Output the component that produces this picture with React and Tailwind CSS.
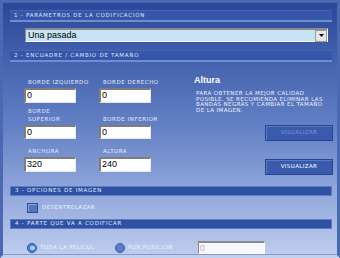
import React from 'react';

const tiny = "font-['DejaVu_Sans',sans-serif] text-[5.5px] uppercase tracking-[0.4px] leading-none whitespace-nowrap";

function Header({ children, dark }) {
  return (
    <div
      className={
        dark
          ? 'h-[10px] w-[322px] flex items-center pl-[4px] bg-[#2f51a3] border border-[#5d7cc4] text-[#e4ebfa]'
          : 'h-[12px] w-[322px] flex items-center pl-[4px] bg-[#3656a9] border-t border-[#4466b4] border-b-2 border-b-[#6f8dd2] text-[#dfe7fa]'
      }
    >
      <span className={`${tiny} tracking-[0.75px]`}>{children}</span>
    </div>
  );
}

function Field({ label, value, h = 'h-[15px]' }) {
  return (
    <div className="flex flex-col justify-end w-[52px]">
      <div className={`${tiny} text-[#e6ecfb] pl-[4px] mb-[3px] tracking-[0.55px]`}>{label}</div>
      <div className={`${h} w-[52px] bg-white border-t-2 border-l-2 border-[#7d7d7d] border-b border-r border-b-[#e8e8e8] border-r-[#e8e8e8] flex items-center pl-[1px] font-['Liberation_Sans',sans-serif] text-[9px] text-black`}>
        {value}
      </div>
    </div>
  );
}

function Btn({ disabled }) {
  return (
    <div
      className={`h-[16px] w-[68px] flex items-center justify-center bg-[#3a5aad] border border-[#26438e] shadow-[inset_1px_1px_0_#5a7ac4] ${tiny} ${
        disabled ? 'text-[#7f97d2]' : 'text-white'
      }`}
    >
      Visualizar
    </div>
  );
}

export default function App() {
  return (
    <div className="w-[340px] h-[258px] overflow-hidden bg-linear-to-b from-[#2a4799] via-[#6582c6] to-[#bfcdee] border-l-[3px] border-r-[3px] border-t-[3px] border-[#4b68b2] border-b-[3px] border-b-[#c4d0ef] font-['Liberation_Sans',sans-serif]">
      <div className="h-full pl-[7px] pr-[5px] pt-[7px] border-b border-[#8797c6]">
        <Header>1 - Parámetros de la codificación</Header>

        {/* select */}
        <div className="mt-[6px] ml-[15px] w-[303px] h-[14px] bg-[#c6e4f6] border-t-2 border-l border-[#8a8a8a] border-b border-r border-b-white border-r-white flex items-center justify-between">
          <span className="pl-[2px] text-[9px] text-black leading-none">Una pasada</span>
          <div className="h-[12px] w-[12px] bg-[#e6e6e6] border border-[#9a9a9a] flex items-center justify-center">
            <svg width="5" height="3" viewBox="0 0 5 3"><path d="M0 0h5L2.5 3z" fill="#000" /></svg>
          </div>
        </div>

        <div className="mt-[8px]">
          <Header>2 - Encuadre / cambio de tamaño</Header>
        </div>

        <div className="flex">
          {/* left fields */}
          <div className="ml-[14px] flex flex-col">
            <div className="flex gap-[23px] h-[41px]">
              <Field label="Borde izquierdo" value="0" />
              <Field label="Borde derecho" value="0" />
            </div>
            <div className="flex gap-[23px] h-[36px]">
              <Field label={<>Borde<span className="block mt-[2px]">superior</span></>} value="0" h="h-[14px]" />
              <Field label="Borde inferior" value="0" h="h-[14px]" />
            </div>
            <div className="flex gap-[23px] h-[33px]">
              <Field label="Anchura" value="320" />
              <Field label="Altura" value="240" />
            </div>
          </div>

          {/* right info */}
          <div className="ml-[43px] flex flex-col pt-[14px]">
            <div className="text-[9px] font-bold text-white leading-none">Altura</div>
            <p className={`${tiny} text-[#eef2fc] mt-[6px] ml-[2px] leading-[5px] tracking-[0.3px]`}>
              Para obtener la mejor calidad<br />
              posible. se recomienda eliminar las<br />
              bandas negras y cambiar el tamaño<br />
              de la imagen.
            </p>
            <div className="mt-[12px] ml-[71px]">
              <Btn disabled />
            </div>
            <div className="mt-[18px] ml-[71px]">
              <Btn />
            </div>
          </div>
        </div>

        <div className="mt-[11px]">
          <Header dark>3 - Opciones de imagen</Header>
        </div>

        <div className="mt-[7px] ml-[17px] flex items-center gap-[4px]">
          <div className="w-[11px] h-[10px] bg-[#5674bd] border border-[#2c4a97] shadow-[inset_1px_1px_0_#8ea6de]" />
          <span className={`${tiny} text-[#eef2fc]`}>Desentrelazar</span>
        </div>

        <div className="mt-[6px]">
          <Header dark>4 - Parte que va a codificar</Header>
        </div>

        <div className="mt-[12px] ml-[17px] flex items-center">
          <div className="w-[10px] h-[10px] rounded-full bg-[#4f86d6] border border-[#2d4f9c] flex items-center justify-center">
            <div className="w-[5px] h-[4px] rounded-full bg-[#a8d0f6]" />
          </div>
          <span className={`${tiny} text-[#eef2fc] ml-[3px] w-[75px]`}>Toda la pelicul</span>
          <div className="w-[10px] h-[10px] rounded-full bg-[#5c7cc4] border border-[#3b5aa6]" />
          <span className={`${tiny} text-[#eef2fc] ml-[3px] w-[70px]`}>Por posición</span>
          <div className="w-[67px] h-[13px] bg-[#f4f7fd] border-t-2 border-l border-[#8a8a8a] border-b border-r border-b-white border-r-white flex items-center pl-[1px] text-[9px] text-[#b4b4b4] leading-none">
            0
          </div>
        </div>
      </div>
    </div>
  );
}
